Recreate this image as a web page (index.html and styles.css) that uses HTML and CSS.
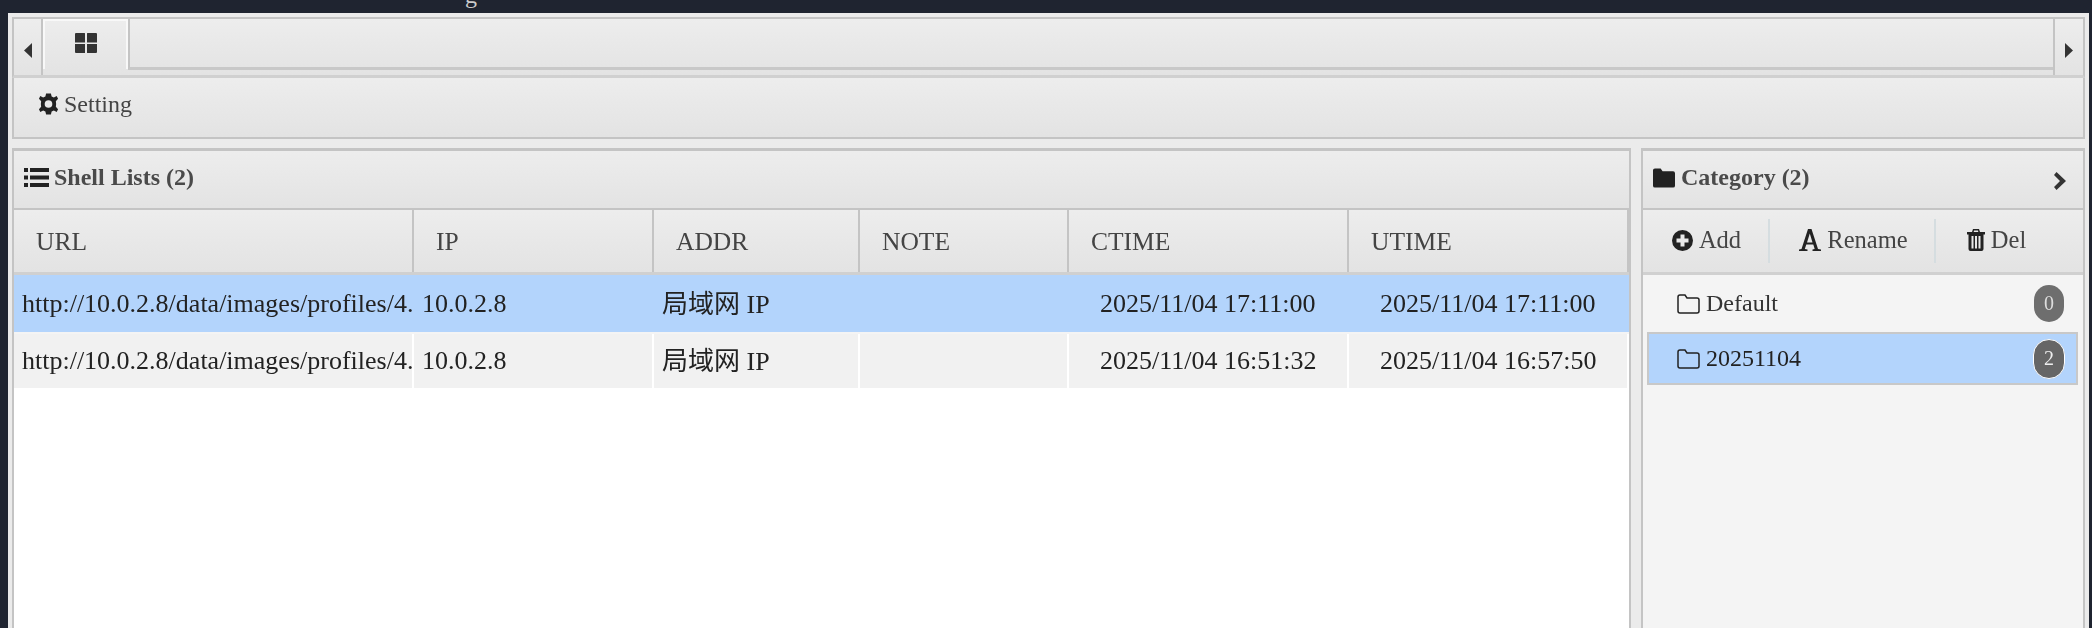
FILE: index.html
```html
<!DOCTYPE html>
<html>
	<head>
		<title>Shell Lists</title>
		<link rel="stylesheet" href="styles.css">
	</head>
	<body>
		<div class="titleCut">g</div>
		<div class="app">
			<div class="tabBar">
				<div class="tabArrow tabArrowLeft"><svg width="8" height="15" viewBox="0 0 8 15"><path d="M8 0V15L0 7.500Z"/></svg></div>
				<div class="tab">
					<svg width="24" height="22" viewBox="0 0 24 22"><path d="M2 1H10.500A.5 .5 0 0 1 11 1.500V10.500H1V2A1 1 0 0 1 2 1ZM13 1.500A.5 .5 0 0 1 13.500 1H22A1 1 0 0 1 23 2V10.500H13ZM1 12H11V21H2A1 1 0 0 1 1 20ZM13 12H23V20A1 1 0 0 1 22 21H13.500A.5 .5 0 0 1 13 20.500Z"/></svg>
				</div>
				<div class="tabRest"></div>
				<div class="tabArrow tabArrowRight"><svg width="8" height="15" viewBox="0 0 8 15"><path d="M0 0V15L8 7.500Z"/></svg></div>
			</div>
			<div class="toolbar">
				<span class="toolItem">
					<svg class="icon" width="21" height="24" viewBox="0 0 22 24"><path fill-rule="evenodd" d="M8.500 1H13.500L14.300 4.200 16.600 5.200 19.600 3.600 21 6.500 18.700 9 19 12 18.700 15 21 17.500 19.600 20.400 16.600 18.800 14.300 19.800 13.500 23H8.500L7.700 19.800 5.400 18.800 2.400 20.400 1 17.500 3.300 15 3 12 3.300 9 1 6.500 2.400 3.600 5.400 5.200 7.700 4.200ZM11 8A4 4 0 1 0 11 16 4 4 0 1 0 11 8Z"/></svg>
					Setting
				</span>
			</div>
			<div class="panels">
				<div class="panel shellPanel">
					<div class="panelHead">
						<svg class="icon" width="25" height="21" viewBox="0 0 25 21"><path d="M0 1H4V5H0ZM6 1H25V5H6ZM0 8.500H4V12.500H0ZM6 8.500H25V12.500H6ZM0 16H4V20H0ZM6 16H25V20H6Z"/></svg>
						Shell Lists (2)
					</div>
					<div class="grid gridHead">
						<div class="cell">URL</div>
						<div class="cell">IP</div>
						<div class="cell">ADDR</div>
						<div class="cell">NOTE</div>
						<div class="cell">CTIME</div>
						<div class="cell">UTIME</div>
					</div>
					<div class="listBody">
						<div class="grid row rowSelected">
							<div class="cell">http://10.0.2.8/data/images/profiles/4.</div>
							<div class="cell">10.0.2.8</div>
							<div class="cell cellAddr">局域网 IP</div>
							<div class="cell"></div>
							<div class="cell cellTime">2025/11/04 17:11:00</div>
							<div class="cell cellTime">2025/11/04 17:11:00</div>
						</div>
						<div class="grid row rowPlain">
							<div class="cell">http://10.0.2.8/data/images/profiles/4.</div>
							<div class="cell">10.0.2.8</div>
							<div class="cell cellAddr">局域网 IP</div>
							<div class="cell"></div>
							<div class="cell cellTime">2025/11/04 16:51:32</div>
							<div class="cell cellTime">2025/11/04 16:57:50</div>
						</div>
					</div>
				</div>
				<div class="panel categoryPanel">
					<div class="panelHead categoryHead">
						<span>
							<svg class="icon" width="22" height="20" viewBox="0 0 23 20"><path d="M2 0H8L10 3H21A2 2 0 0 1 23 5V18A2 2 0 0 1 21 20H2A2 2 0 0 1 0 18V2A2 2 0 0 1 2 0Z"/></svg>
							Category (2)
						</span>
						<svg width="14" height="18" viewBox="0 0 14 18"><path d="M1 3 3.500 0 13 9 3.500 18 1 15 7 9Z"/></svg>
					</div>
					<div class="catTools">
						<span class="catTool catToolAdd">
							<svg class="icon" width="21" height="21" viewBox="0 0 21 21"><path fill-rule="evenodd" d="M10.500 0A10.500 10.500 0 1 0 10.500 21 10.500 10.500 0 1 0 10.500 0ZM8.500 4.500H12.500V8.500H16.500V12.500H12.500V16.500H8.500V12.500H4.500V8.500H8.500Z"/></svg>
							Add
						</span>
						<span class="catTool catToolRename">
							<svg class="icon" width="22" height="22" viewBox="0 0 22 22"><path fill-rule="evenodd" d="M9 0H12.500L19 20 22 20.500V22H13.500V20.500L15.700 20 14.300 15.500H7.300L5.800 20 8.500 20.500V22H0V20.500L2.500 20ZM10.800 4.500 8 13.500H13.500Z"/></svg>
							Rename
						</span>
						<span class="catTool catToolDel">
							<svg class="icon" width="18" height="22" viewBox="0 0 18 22"><path fill-rule="evenodd" d="M6 0H12L13 3H18V5.500H16.500V20A2 2 0 0 1 14.500 22H3.500A2 2 0 0 1 1.500 20V5.500H0V3H5ZM7 1.500 6.700 3H11.300L11 1.500ZM4.500 7V19.500H6.500V7ZM8 7V19.500H10V7ZM11.500 7V19.500H13.500V7Z"/></svg>
							Del
						</span>
					</div>
					<div class="catList">
						<div class="catItem">
							<span class="catName">
								<svg class="icon" width="23" height="20" viewBox="0 0 23 20"><path fill="none" stroke="#222" stroke-width="1.500" d="M3 1H8L10 4H20A2 2 0 0 1 22 6V17A2 2 0 0 1 20 19H3A2 2 0 0 1 1 17V3A2 2 0 0 1 3 1Z"/></svg>
								Default
							</span>
							<span class="badge">0</span>
						</div>
						<div class="catItem catItemSelected">
							<span class="catName">
								<svg class="icon" width="23" height="20" viewBox="0 0 23 20"><path fill="none" stroke="#222" stroke-width="1.500" d="M3 1H8L10 4H20A2 2 0 0 1 22 6V17A2 2 0 0 1 20 19H3A2 2 0 0 1 1 17V3A2 2 0 0 1 3 1Z"/></svg>
								20251104
							</span>
							<span class="badge badgeSelected">2</span>
						</div>
					</div>
				</div>
			</div>
		</div>
	</body>
</html>
```

FILE: styles.css
```css
*
	{
		box-sizing: border-box;
	}
html, body
	{
		height: 100%;
	}
body
	{
		margin: 0;
		overflow: hidden;
		background-color: #1f2430;
		font-family: "Liberation Serif", "Noto Sans CJK SC", serif;
		font-size: 24px;
		color: #444;
		padding: 13px 3px 0 8px;
	}
.titleCut
	{
		position: absolute;
		top: -18px;
		left: 465px;
		color: #ccc;
		font-size: 24px;
	}
.app
	{
		height: 100%;
		background-color: #ebebeb;
		padding: 4px 4px 0 4px;
		display: flex;
		flex-direction: column;
		filter: blur(0.4px);
	}
.icon
	{
		fill: #222;
		flex-shrink: 0;
	}
.tabBar
	{
		display: flex;
		height: 61px;
		flex-shrink: 0;
		border: solid #c4c4c4;
		border-width: 2px 2px 3px 2px;
		border-bottom-color: #d0d0d0;
		background: linear-gradient(#ededed, #e3e3e3);
	}
.tabArrow
	{
		width: 29px;
		display: flex;
		align-items: center;
		justify-content: center;
		flex-shrink: 0;
	}
.tabArrow svg
	{
		fill: #333;
		margin-top: 6px;
	}
.tabArrowLeft
	{
		border-right: 2px solid #c4c4c4;
	}
.tabArrowRight
	{
		width: 30px;
		border-left: 2px solid #c4c4c4;
	}
.tab
	{
		width: 85px;
		height: 50px;
		padding-top: 11px;
		display: flex;
		justify-content: center;
		align-items: flex-start;
		border: 2px solid #f8f8f8;
		border-bottom: none;
	}
.tab svg
	{
		fill: #333;
	}
.tabRest
	{
		flex: 1;
		border-left: 2px solid #c4c4c4;
		border-bottom: 3px solid #c8c8c8;
		height: 51px;
	}
.toolbar
	{
		height: 61px;
		flex-shrink: 0;
		padding: 0 0 7px 24px;
		display: flex;
		align-items: center;
		border: solid #c4c4c4;
		border-width: 0 2px 2px 2px;
		background: linear-gradient(#ededed, #e3e3e3);
	}
.toolItem
	{
		display: flex;
		align-items: center;
		gap: 5px;
	}
.panels
	{
		flex: 1;
		min-height: 0;
		display: flex;
		gap: 10px;
		padding-top: 9px;
	}
.panel
	{
		display: flex;
		flex-direction: column;
		border: solid #c4c4c4;
		border-width: 3px 2px 0 2px;
		background-color: #fff;
	}
.shellPanel
	{
		width: 1619px;
	}
.categoryPanel
	{
		flex: 1;
		background-color: #f4f4f4;
	}
.panelHead
	{
		height: 59px;
		flex-shrink: 0;
		padding: 0 0 4px 10px;
		display: flex;
		align-items: center;
		gap: 5px;
		font-weight: bold;
		color: #4a4a4a;
		border-bottom: 2px solid #c4c4c4;
		background: linear-gradient(#ededed, #e3e3e3);
	}
.categoryHead
	{
		justify-content: space-between;
		padding: 0 16px 4px 10px;
	}
.categoryHead span
	{
		display: flex;
		align-items: center;
		gap: 6px;
	}
.categoryHead > svg
	{
		fill: #333;
		margin-top: 7px;
	}
.grid
	{
		display: grid;
		grid-template-columns: 400px 240px 206px 209px 280px 1fr;
	}
.gridHead
	{
		height: 65px;
		flex-shrink: 0;
		align-items: stretch;
		background: linear-gradient(#ededed, #e3e3e3);
		border-bottom: 3px solid #d0d0d0;
	}
.gridHead .cell
	{
		padding-left: 22px;
		padding-top: 2px;
		font-size: 25.500px;
		border-right: 2px solid #c4c4c4;
		color: #444;
	}
.cell
	{
		display: flex;
		align-items: center;
		padding-left: 8px;
		white-space: nowrap;
		overflow: hidden;
		color: #222;
		font-size: 26px;
	}
.cellAddr
	{
		padding-bottom: 5px;
	}
.cellTime
	{
		padding-left: 31px;
	}
.row
	{
		height: 59px;
	}
.rowSelected
	{
		background-color: #b3d4fc;
		border-bottom: 2px solid #f4f4f4;
	}
.rowPlain
	{
		height: 54px;
		background-color: #f1f1f1;
	}
.rowPlain .cell
	{
		border-right: 2px solid #fff;
	}
.catTools
	{
		height: 65px;
		flex-shrink: 0;
		display: flex;
		align-items: center;
		border-bottom: 3px solid #d0d0d0;
		background: linear-gradient(#ededed, #e3e3e3);
		font-size: 24.500px;
	}
.catTool
	{
		height: 44px;
		display: flex;
		align-items: center;
		justify-content: center;
		gap: 6px;
		padding-bottom: 2px;
	}
.catToolAdd
	{
		width: 127px;
		padding-left: 2px;
		border-right: 2px solid #d5dde0;
	}
.catToolRename
	{
		width: 166px;
		padding-left: 3px;
		border-right: 2px solid #d5dde0;
	}
.catToolDel
	{
		width: 121px;
	}
.catList
	{
		padding: 0 5px 0 4px;
	}
.catItem
	{
		height: 57px;
		display: flex;
		align-items: center;
		justify-content: space-between;
		padding: 0 14px 0 30px;
	}
.catItemSelected
	{
		height: 53px;
		background-color: #b3d4fc;
		border: 2px solid #c8c8c8;
		padding: 0 11px 0 28px;
	}
.catName
	{
		display: flex;
		align-items: center;
		gap: 6px;
		color: #333;
	}
.catItemSelected .catName
	{
		color: #222;
	}
.badge
	{
		width: 30px;
		height: 37px;
		border-radius: 15px;
		background-color: #6e6e6e;
		color: #ddd;
		font-size: 20px;
		display: flex;
		align-items: center;
		justify-content: center;
	}
.badgeSelected
	{
		width: 32px;
		height: 40px;
		border-radius: 16px;
		border: 1px solid #fff;
		background-color: #666;
		color: #eee;
	}
```
